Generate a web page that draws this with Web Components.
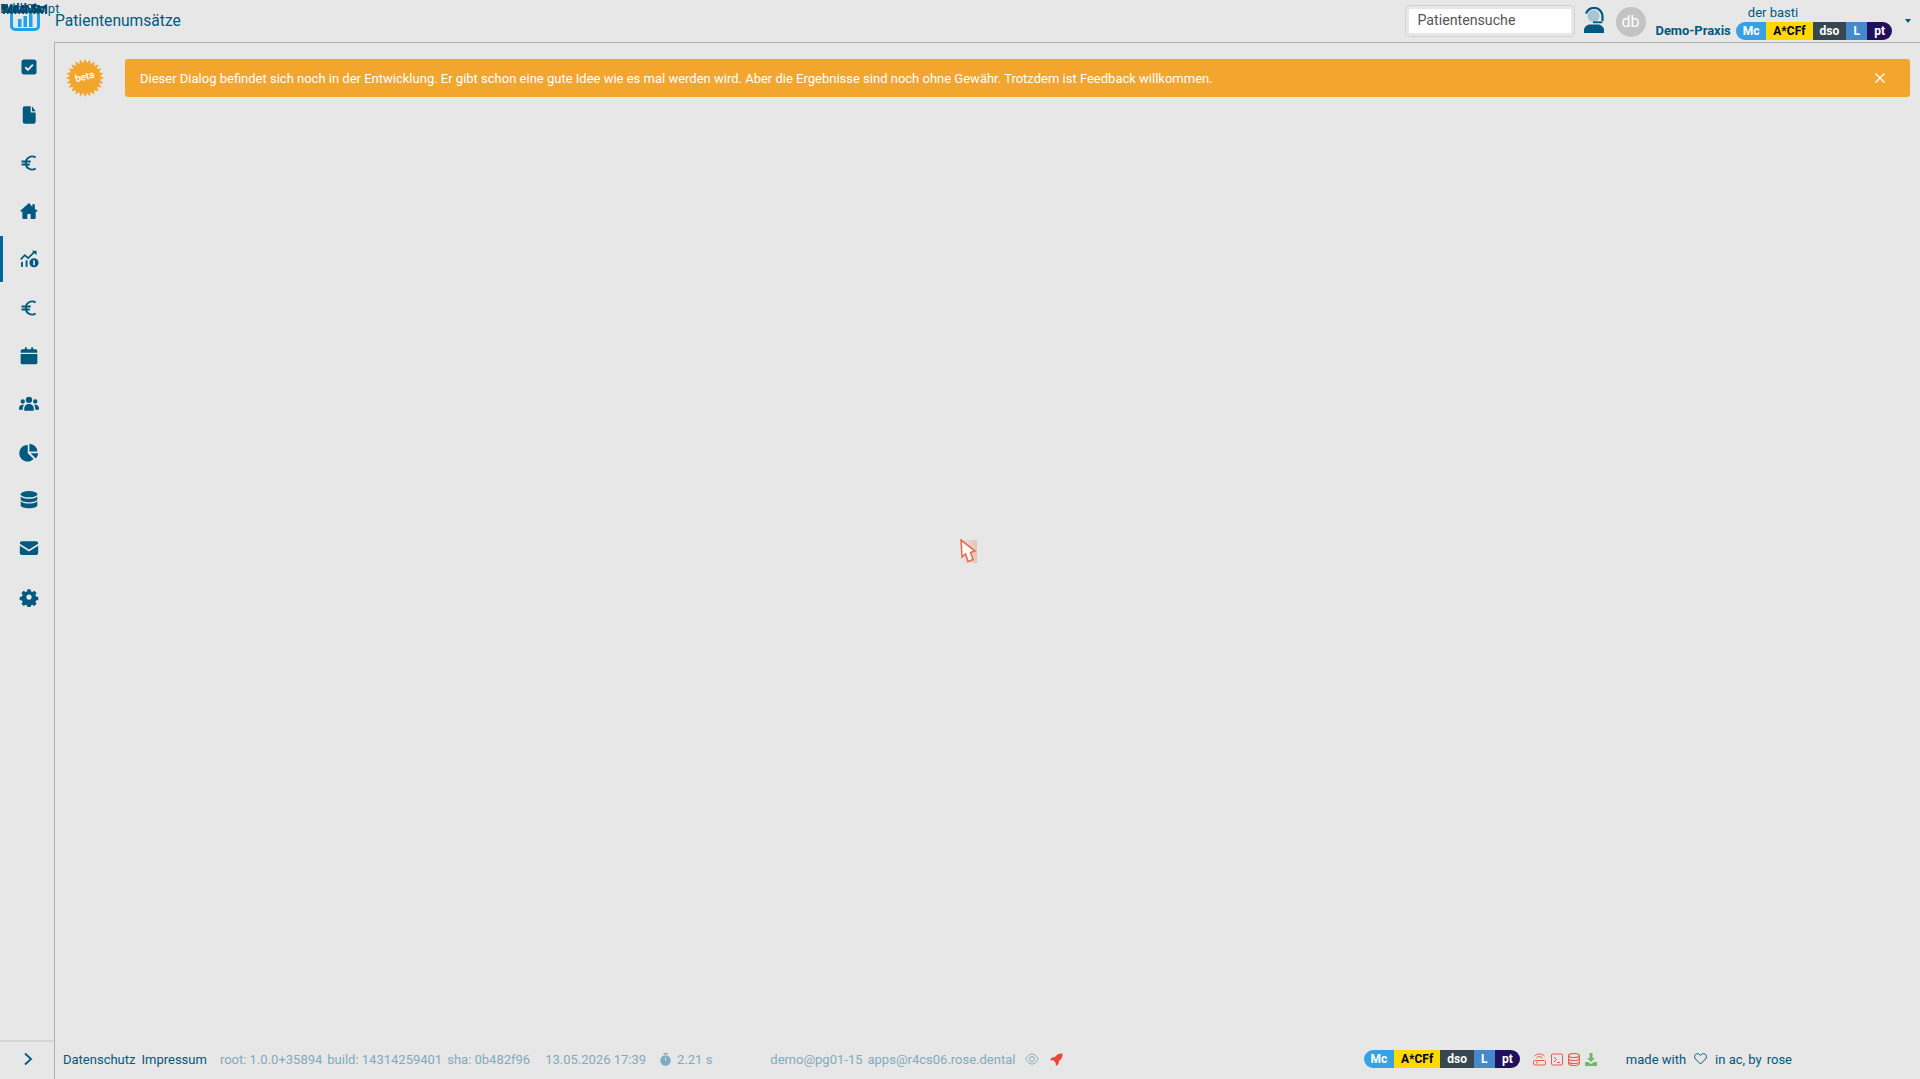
<!doctype html>
<html lang="de">
<head>
<meta charset="utf-8">
<title>Patientenumsätze</title>
<style>
  html,body{margin:0;height:100%;background:#e7e7e7;font-family:Roboto,"Liberation Sans",sans-serif;overflow:hidden}
</style>
</head>
<body>
<app-shell>
  <top-bar slot="top" title="Patientenumsätze"></top-bar>
  <side-nav slot="side"></side-nav>
  <beta-banner slot="main">Dieser Dialog befindet sich noch in der Entwicklung. Er gibt schon eine gute Idee wie es mal werden wird. Aber die Ergebnisse sind noch ohne Gewähr. Trotzdem ist Feedback willkommen.</beta-banner>
  <app-footer slot="foot"></app-footer>
</app-shell>
<script>
// icons, all on a 24 box unless the markup says otherwise
const ICONS = {
  check: '<rect x="3" y="3" width="18" height="18" rx="3"/><path d="M7.500 12.300l3.200 3.200 6-6.400" fill="none" stroke="#e7e7e7" stroke-width="2.400"/>',
  file: '<path d="M7 1.500h7v6.500a1 1 0 0 0 1 1h5v11a2.500 2.500 0 0 1-2.500 2.500h-10.500a2.500 2.500 0 0 1-2.500-2.500v-16a2.500 2.500 0 0 1 2.500-2.500z"/><path d="M15.500 1.500l4.500 6h-4.500z"/>',
  euro: '<path d="M20 5.500a7.500 7.500 0 0 0-11.800 6.500 7.500 7.500 0 0 0 11.800 6.500M3 10.200h11M3 13.800h10" fill="none" stroke="currentColor" stroke-width="2.300"/>',
  home: '<path d="M12 2.500L1.500 11.800l1.300 1.500L4 12.300V20a1.500 1.500 0 0 0 1.500 1.500H10v-6h4v6h4.500A1.500 1.500 0 0 0 20 20v-7.700l1.200 1 1.300-1.500L19 9.500V4h-3v2.800z"/>',
  chart: '<path d="M2 12.500l5-5 4 3.500 7.500-7.500" fill="none" stroke="currentColor" stroke-width="2"/><path d="M15.500 2H21v5.500z"/><rect x="2.500" y="15.500" width="2.200" height="6"/><rect x="8" y="13.500" width="2.200" height="8"/><circle cx="18" cy="16.500" r="5.500"/><rect x="17" y="13.500" width="2" height="6" fill="#e7e7e7"/>',
  calendar: '<rect x="7" y="1.500" width="2.500" height="4" rx="1"/><rect x="14.500" y="1.500" width="2.500" height="4" rx="1"/><path d="M2 8V6a2 2 0 0 1 2-2h16a2 2 0 0 1 2 2v2z"/><path d="M2 9.500h20V20a2 2 0 0 1-2 2H4a2 2 0 0 1-2-2z"/>',
  users: '<circle cx="12" cy="7" r="3.800"/><circle cx="4.500" cy="9" r="2.600"/><circle cx="19.500" cy="9" r="2.600"/><path d="M6.300 20v-2.500c0-3 2.500-5.500 5.700-5.500s5.700 2.500 5.700 5.500V20z"/><path d="M0 19v-2c0-2.500 2-4 4-4h2a7 7 0 0 0-1.500 4.500V19zM24 19v-2c0-2.500-2-4-4-4h-2a7 7 0 0 1 1.500 4.500V19z"/>',
  pie: '<path d="M10.500 3.500v10l7 7A10 10 0 1 1 10.500 3.500z"/><path d="M12.500 2a10 10 0 0 1 9.500 9.500h-9.500z"/><path d="M14 13.500h9a10 10 0 0 1-2.800 6.300z"/>',
  db: '<ellipse cx="12" cy="5" rx="10" ry="3.800"/><path d="M2 7.800c1.500 2 5.500 2.800 10 2.800s8.500-.8 10-2.800V11c0 2-4.500 3.600-10 3.600S2 13 2 11z"/><path d="M2 14c1.500 2 5.500 2.800 10 2.800S20.500 16 22 14v5c0 2-4.500 3.600-10 3.600S2 21 2 19z" transform="translate(0 -.6)"/>',
  mail: '<path d="M1 6.500A2.500 2.500 0 0 1 3.500 4h17A2.500 2.500 0 0 1 23 6.500v.4l-11 7-11-7z"/><path d="M1 9.200l11 7 11-7V18a2.500 2.500 0 0 1-2.500 2.500h-17A2.500 2.500 0 0 1 1 18z"/>',
  cog: '<path fill-rule="evenodd" d="M10 1.500h4l.6 3 2 .9 2.600-1.600 2.900 2.900-1.600 2.600.9 2 3 .6v4l-3 .6-.9 2 1.600 2.600-2.900 2.900-2.600-1.600-2 .9-.6 3h-4l-.6-3-2-.9-2.600 1.600-2.900-2.900 1.600-2.600-.9-2-3-.6v-4l3-.6.9-2-1.600-2.600 2.900-2.900 2.600 1.600 2-.9zM12 8.500a3.500 3.500 0 1 0 0 7 3.500 3.500 0 0 0 0-7z" transform="translate(1.200 1.200) scale(.9)"/>'
};

class AppShell extends HTMLElement {
  connectedCallback() {
    this.attachShadow({ mode: 'open' });
    this.shadowRoot.innerHTML = `
      <style>
        :host{display:grid;grid-template-columns:54px 1fr;grid-template-rows:42px 1fr;height:1079px;overflow:hidden}
        .top{grid-column:1/3}
        .main{border-left:1px solid #b0b0b0;border-top:1px solid #b0b0b0;display:flex;flex-direction:column;min-height:0;position:relative}
        .content{flex:1}
        .cursor{position:absolute;left:905px;top:496px;width:17px;height:25px}
      </style>
      <div class="top"><slot name="top"></slot></div>
      <slot name="side"></slot>
      <div class="main">
        <div class="content"><slot name="main"></slot></div>
        <slot name="foot"></slot>
        <svg class="cursor" viewBox="0 0 17 25">
          <defs><linearGradient id="glow" x1="0" x2="1"><stop offset="0" stop-color="#e98a70" stop-opacity=".05"/><stop offset="1" stop-color="#e98a70" stop-opacity=".4"/></linearGradient></defs>
          <path d="M2 1h15v23H4z" fill="url(#glow)"/>
          <path d="M1 1l14 11-4.500 1.500 2.500 7-5 2-2.500-7.500-3.500 3z" fill="#fdfaf8" stroke="#e5704f" stroke-width="1.600"/>
        </svg>
      </div>`;
  }
}
customElements.define('app-shell', AppShell);

class FeatureBadges extends HTMLElement {
  connectedCallback() {
    this.attachShadow({ mode: 'open' });
    const segs = [['Mc', 30, '#36a2e5', '#fff'], ['A*CFf', 46.5, '#ffd900', '#000'], ['dso', 33.5, '#37474f', '#fff'], ['L', 21, '#4489c9', '#fff'], ['pt', 25, '#22105c', '#fff']];
    this.shadowRoot.innerHTML = `
      <style>
        :host{display:inline-flex;height:18px;border-radius:9px;overflow:hidden;font:700 12px/18px Roboto,sans-serif;flex:none}
        span{display:block;text-align:center}
      </style>` + segs.map(s => `<span style="width:${s[1]}px;background:${s[2]};color:${s[3]}">${s[0]}</span>`).join('');
  }
}
customElements.define('feature-badges', FeatureBadges);

class TopBar extends HTMLElement {
  connectedCallback() {
    this.attachShadow({ mode: 'open' });
    this.shadowRoot.innerHTML = `
      <style>
        :host{display:flex;align-items:center;height:42px;color:#00597f;position:relative}
        .logo{width:30px;height:22px;margin:-2px 15px 0 10px;flex:none}
        .title{font-size:15.600px;flex:1;margin-top:-1px}
        .scribble{position:absolute;left:0;top:2px;font:13px/13px Roboto,sans-serif;color:#00597f;white-space:nowrap}
        .scribble span{position:absolute;left:0;top:0}
        .blob{font-weight:700;color:#00486a}
        .search{box-sizing:border-box;width:170px;height:32px;border:1px solid #d2d2d2;border-radius:5px;padding:3px}
        .search div{background:#fff;height:24px;font-size:14.200px;line-height:22px;color:#555;padding-left:9px}
        .agent{width:22px;height:26px;margin:-3px 0 0 8px;flex:none}
        .avatar{width:30px;height:30px;border-radius:50%;background:#c3c3c3;color:#fff;font-size:16px;line-height:30px;text-align:center;margin:1px 0 0 11px;flex:none}
        .user{display:grid;justify-items:end;align-self:flex-start;padding-top:5px;width:264.500px;margin-left:10px;position:relative;flex:none}
        .name{font-size:13px;line-height:15px;margin-right:122px}
        .org{display:flex;align-items:center;gap:5.500px;font-size:12.900px;font-weight:700;margin-top:1.500px;padding-right:28px;white-space:nowrap}
        .caret{position:absolute;right:9px;top:19px;width:0;height:0;border:3.500px solid transparent;border-top:4px solid #00597f;border-bottom:0}
      </style>
      <div class="scribble">
        <span>Bdd Skript</span><span class="blob" style="left:1px">Wdd Sc</span><span class="blob" style="left:2px;top:1px">MMMM</span>
      </div>
      <svg class="logo" viewBox="0 0 30 22">
        <rect x="1.500" y="1.500" width="27" height="19" rx="3.500" fill="#e7e7e7" stroke="#1fa3ea" stroke-width="3"/>
        <rect x="8" y="10" width="3.500" height="8" fill="#1fa3ea"/><rect x="13.500" y="7" width="3.500" height="11" fill="#1fa3ea"/><rect x="19" y="4.500" width="3.500" height="13.500" fill="#1fa3ea"/>
      </svg>
      <div class="title">${this.getAttribute('title')}</div>
      <div class="search"><div>Patientensuche</div></div>
      <svg class="agent" viewBox="0 0 22 26">
        <circle cx="10.500" cy="9" r="6" fill="#a9c4d2"/>
        <path d="M3 6.500A8.500 8.500 0 0 1 19.500 9v5" fill="none" stroke="#00597f" stroke-width="2.200"/>
        <path d="M10 15.300h9.500" stroke="#00597f" stroke-width="1.800"/>
        <path d="M1 26v-3c0-3 3-5.500 6-5.500h8c3 0 6 2.500 6 5.500v3z" fill="#00597f"/>
      </svg>
      <div class="avatar">db</div>
      <div class="user">
        <div class="name">der basti</div>
        <div class="org">Demo-Praxis <feature-badges></feature-badges></div>
        <i class="caret"></i>
      </div>`;
  }
}
customElements.define('top-bar', TopBar);

class NavIcon extends HTMLElement {
  connectedCallback() {
    this.attachShadow({ mode: 'open' });
    const active = this.hasAttribute('active');
    this.shadowRoot.innerHTML = `
      <style>
        :host{display:flex;align-items:center;justify-content:center;height:48.200px;padding-left:3px;color:#00597f;position:relative}
        svg{width:20px;height:20px;fill:currentColor}
        .bar{position:absolute;left:0;top:1px;bottom:1px;width:3px;background:#00689a}
      </style>
      ${active ? '<i class="bar"></i>' : ''}
      <svg viewBox="0 0 24 24">${ICONS[this.getAttribute('icon')]}</svg>`;
  }
}
customElements.define('nav-icon', NavIcon);

class SideNav extends HTMLElement {
  connectedCallback() {
    this.attachShadow({ mode: 'open' });
    const items = ['check', 'file', 'euro', 'home', 'chart', 'euro', 'calendar', 'users', 'pie', 'db', 'mail', 'cog'];
    this.shadowRoot.innerHTML = `
      <style>
        :host{display:flex;flex-direction:column;height:1037px}
        .items{flex:1;padding-top:.5px}
        .toggle{border-top:2px solid #d6d6d6;height:39px;padding:0 0 3px 1px;display:flex;align-items:center;justify-content:center;box-sizing:border-box}
        .toggle svg{width:10px;height:14px}
      </style>
      <div class="items">${items.map((n, i) => `<nav-icon icon="${n}"${i === 4 ? ' active' : ''}></nav-icon>`).join('')}</div>
      <div class="toggle"><svg viewBox="0 0 10 14"><path d="M2 1.500l6 5.500-6 5.500" fill="none" stroke="#00597f" stroke-width="1.800"/></svg></div>`;
  }
}
customElements.define('side-nav', SideNav);

class BetaBanner extends HTMLElement {
  connectedCallback() {
    this.attachShadow({ mode: 'open' });
    // starburst outline for the beta sticker
    let pts = [];
    for (let i = 0; i < 48; i++) {
      const r = i % 2 ? 15 : 19, a = i * Math.PI / 24;
      pts.push((19 + r * Math.cos(a)).toFixed(1) + ',' + (19 + r * Math.sin(a)).toFixed(1));
    }
    this.shadowRoot.innerHTML = `
      <style>
        :host{display:flex;align-items:center;padding:16px 10px 0 11px}
        .sticker{position:relative;width:38px;height:38px;flex:none;margin-right:21px}
        .sticker svg{display:block;width:38px;height:38px}
        .sticker span{position:absolute;inset:0;text-align:center;font:500 10px/36px Roboto,sans-serif;color:#fff;transform:rotate(-14deg)}
        .bar{flex:1;height:38px;background:#f3a62d;border-radius:3px;color:#fff;font-size:13px;line-height:38px;padding:1px 15px 0;box-sizing:border-box;display:flex;justify-content:space-between;align-items:center}
        .bar svg{width:12px;height:12px;margin:-1px 9px 0 0}
      </style>
      <div class="sticker"><svg viewBox="0 0 38 38"><polygon points="${pts.join(' ')}" fill="#f3a62d"/></svg><span>beta</span></div>
      <div class="bar"><div><slot></slot></div><svg viewBox="0 0 12 12"><path d="M1.500 1.500l9 9M10.500 1.500l-9 9" stroke="#fff" stroke-width="1.300"/></svg></div>`;
  }
}
customElements.define('beta-banner', BetaBanner);

class AppFooter extends HTMLElement {
  connectedCallback() {
    this.attachShadow({ mode: 'open' });
    this.shadowRoot.innerHTML = `
      <style>
        :host{display:flex;align-items:center;box-sizing:border-box;height:37px;padding:0 0 3px 8px;font-size:13px;color:#00597f;white-space:nowrap}
        .m{color:#7fabc0}
        svg{flex:none;display:block}
        .ic{display:flex;align-items:center;gap:5px}
      </style>
      <span>Datenschutz</span>
      <span style="margin-left:6px">Impressum</span>
      <span class="m" style="margin-left:13px">root: 1.0.0+35894</span>
      <span class="m" style="margin-left:5px">build: 14314259401</span>
      <span class="m" style="margin-left:5px">sha: 0b482f96</span>
      <span class="m" style="margin-left:15px">13.05.2026 17:39</span>
      <svg style="margin-left:14px" width="11" height="13" viewBox="0 0 11 13"><circle cx="5.500" cy="7.500" r="5.200" fill="#7fabc0"/><rect x="3.500" y="0" width="4" height="1.500" fill="#7fabc0"/><path d="M5.500 4.500v3" stroke="#e7e7e7"/></svg>
      <span class="m" style="margin-left:6px">2.21 s</span>
      <span class="m" style="margin-left:58px">demo@pg01-15</span>
      <span class="m" style="margin-left:5px">apps@r4cs06.rose.dental</span>
      <svg style="margin-left:10px" width="14" height="12" viewBox="0 0 14 12" fill="none" stroke="#7fabc0"><path d="M.7 6C3 2 5 1 7 1s4 1 6.300 5C11 10 9 11 7 11S3 10 .7 6z"/><circle cx="7" cy="6" r="2.500"/></svg>
      <svg style="margin-left:11px" width="13" height="13" viewBox="0 0 13 13" fill="#f04438"><path d="M12.500.5c.3 3-.8 5.500-3.500 7.500l-.5 3L6 13l-.5-3.500L3.500 7.500 0 7l2-2.500 3-.5C7 1.300 9.500.2 12.500.5z"/></svg>
      <feature-badges style="margin-left:auto"></feature-badges>
      <div class="ic" style="margin-left:13px">
        <svg width="13" height="13" viewBox="0 0 13 13" fill="none" stroke="#ee5a4a"><rect x=".5" y="7.500" width="12" height="4.500" rx="1"/><path d="M3.500 5a4 4 0 0 1 6 0M1.500 3a7 7 0 0 1 10 0M3 9.700h2"/></svg>
        <svg width="12" height="13" viewBox="0 0 12 13" fill="none" stroke="#ee5a4a"><rect x=".5" y="1" width="11" height="11" rx="1"/><path d="M3 4l2.500 2.500L3 9M6 9.500h3"/></svg>
        <svg width="12" height="13" viewBox="0 0 12 13" fill="none" stroke="#ee5a4a" stroke-width="1.100"><ellipse cx="6" cy="2.500" rx="5.400" ry="2"/><path d="M.6 2.500v8c0 1.100 2.400 2 5.400 2s5.400-.9 5.400-2v-8M.6 5.500c0 1.100 2.400 2 5.400 2s5.400-.9 5.400-2M.6 8.500c0 1.100 2.400 2 5.400 2s5.400-.9 5.400-2"/></svg>
        <svg width="12" height="13" viewBox="0 0 12 13" fill="#6fba6a"><path d="M4.500 0h3v5H10L6 9 2 5h2.500z"/><path d="M0 9h3l3 2 3-2h3v4H0z"/></svg>
      </div>
      <span style="margin-left:29px">made with</span>
      <svg style="margin-left:8px" width="13" height="12" viewBox="0 0 13 12" fill="none" stroke="#00597f"><path d="M6.500 11L1.500 6C-.5 3.500 1 .7 3.500.7c1.300 0 2.300.7 3 1.800.7-1.100 1.700-1.800 3-1.800 2.500 0 4 2.800 2 5.300z"/></svg>
      <span style="margin-left:8px">in ac, by</span>
      <span style="margin-left:5px;margin-right:128px">rose</span>`;
  }
}
customElements.define('app-footer', AppFooter);
</script>
</body>
</html>
